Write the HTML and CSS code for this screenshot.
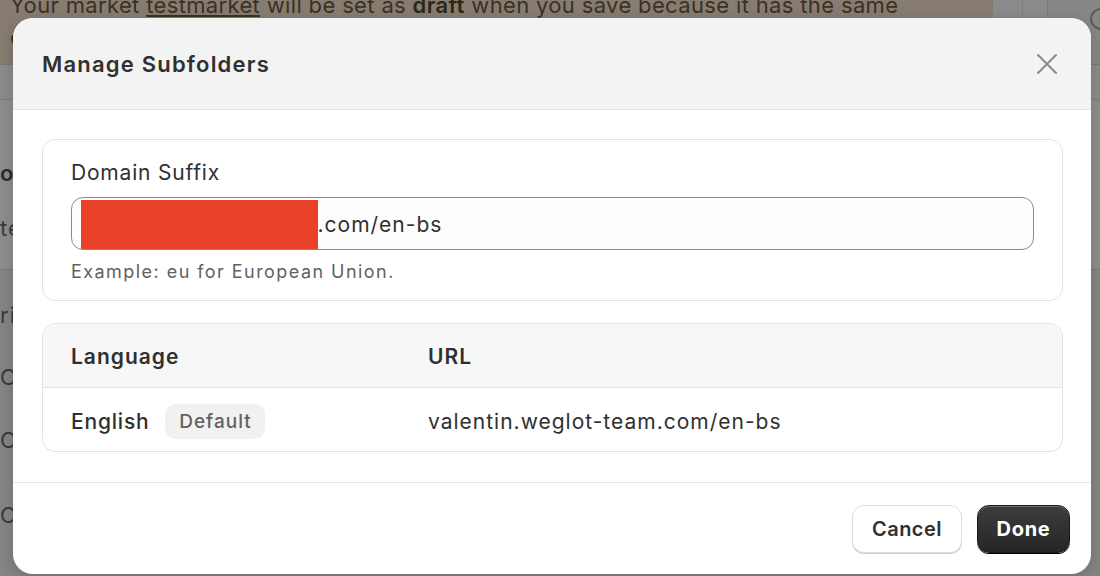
FILE: index.html
```html
<!DOCTYPE html>
<html lang="en">
<head>
<meta charset="utf-8">
<title>Manage Subfolders</title>
<link rel="stylesheet" href="styles.css">
</head>
<body>
<div class="page">
  <div class="top">
    <div class="banner">
      <p class="banner-text">Your market <span class="u">testmarket</span> will be set as <b>draft</b> when you save because it has the same</p>
      <p class="banner-text">conflicting domain settings as another market.</p>
    </div>
    <div class="side-col a"></div>
    <div class="side-col b"></div>
    <div class="side-col c">
      <span class="info">i</span>
    </div>
  </div>
  <div class="strip"></div>
  <div class="section first">
    <div class="frag bold">ok</div>
    <div class="frag">tes</div>
  </div>
  <div class="section second">
    <div class="frag f1">rit</div>
    <div class="frag f2">Cu</div>
    <div class="frag f3">Ca</div>
    <div class="frag f4">Or</div>
  </div>
</div>

<div class="modal" role="dialog" aria-label="Manage Subfolders">
  <div class="modal-header">
    <h2 class="modal-title">Manage Subfolders</h2>
    <button class="close" aria-label="Close">
      <svg width="20" height="20" viewBox="0 0 20 20"><path d="M1 1 L19 19 M19 1 L1 19" stroke="#8a8a8a" stroke-width="2" stroke-linecap="round" fill="none"/></svg>
    </button>
  </div>
  <div class="modal-body">
    <div class="card">
      <label class="field-label">Domain Suffix</label>
      <div class="input">
        <span class="redact"></span><span class="input-text">.com/en-bs</span>
      </div>
      <div class="help">Example: eu for European Union.</div>
    </div>
    <div class="card table">
      <div class="row head">
        <div class="col-lang">Language</div>
        <div class="col-url">URL</div>
      </div>
      <div class="row body-row">
        <div class="col-lang"><span class="lang">English</span><span class="badge">Default</span></div>
        <div class="col-url url">valentin.weglot-team.com/en-bs</div>
      </div>
    </div>
  </div>
  <div class="modal-footer">
    <button class="btn secondary">Cancel</button>
    <button class="btn primary">Done</button>
  </div>
</div>
</body>
</html>
```

FILE: styles.css
```css
* { box-sizing: border-box; }
html, body { margin: 0; padding: 0; }
body {
  width: 1100px;
  height: 576px;
  overflow: hidden;
  background: #858585;
  font-family: Inter, "Noto Sans", "Liberation Sans", sans-serif;
  position: relative;
}

/* dimmed page behind the modal */
.page { width: 1100px; height: 576px; }
.top { display: flex; height: 65px; border-bottom: 1px solid #7a7a7a; }
.banner {
  width: 993px;
  background: #877c72;
  padding: 0 0 0 10px;
  overflow: hidden;
}
.banner-text {
  margin: 0;
  font-size: 22px;
  line-height: 32px;
  letter-spacing: 0.35px;
  color: #3a3222;
  white-space: nowrap;
}
.banner-text:first-child { margin-top: -11px; }
.banner-text .u { text-decoration: underline; }
.banner-text b { font-weight: 600; color: #2e2717; }
.side-col { background: #8b8b8b; border-right: 1px solid #7d7d7d; }
.side-col.a { width: 30px; }
.side-col.b { width: 25px; }
.side-col.c { flex: 1; border-right: 0; background: #878787; position: relative; }
.info {
  position: absolute;
  left: 42px;
  top: 8px;
  width: 22px;
  height: 22px;
  border: 2px solid #5a5a5a;
  border-radius: 50%;
  font-size: 14px;
  line-height: 18px;
  font-weight: 700;
  color: #5a5a5a;
  text-align: center;
}
.strip { height: 35px; background: #8c8c8c; border-bottom: 1px solid #7c7c7c; }
.section { color: #3a3a3a; font-size: 22px; letter-spacing: 1px; }
.section.first {
  height: 170px;
  background: #8e8e8e;
  border-bottom: 1px solid #7c7c7c;
  padding-top: 60px;
  display: flex;
  flex-direction: column;
  gap: 29px;
}
.section.second {
  padding-top: 32px;
  display: flex;
  flex-direction: column;
}
.frag { line-height: 26px; }
.frag.f2 { margin-top: 36px; }
.frag.f3 { margin-top: 37px; }
.frag.f4 { margin-top: 49px; }
.frag.bold { font-weight: 600; color: #2a2a2a; }

/* modal */
.modal {
  position: absolute;
  left: 13px;
  top: 18px;
  width: 1078px;
  height: 556px;
  background: #ffffff;
  border-radius: 20px;
  overflow: hidden;
  box-shadow: 0 4px 16px rgba(0,0,0,0.18);
  display: flex;
  flex-direction: column;
}
.modal-header {
  height: 92px;
  flex: none;
  background: #f3f3f3;
  border-bottom: 1px solid #e3e3e3;
  display: flex;
  align-items: center;
  justify-content: space-between;
  padding: 0 34px 0 29px;
}
.modal-title {
  margin: 0;
  font-size: 22px;
  font-weight: 600;
  color: #303030;
  letter-spacing: 1.2px;
  padding-top: 1px;
}
.close {
  background: none;
  border: 0;
  padding: 0;
  width: 20px;
  height: 20px;
  display: flex;
  cursor: pointer;
}
.modal-body {
  padding: 29px 28px 30px 29px;
  display: flex;
  flex-direction: column;
  gap: 22px;
  border-bottom: 1px solid #e6e6e6;
}
.card {
  border: 1px solid #e3e3e3;
  border-radius: 13px;
  padding: 19px 29px 16px 28px;
  background: #fff;
}
.field-label {
  display: block;
  font-size: 21px;
  line-height: 27px;
  letter-spacing: 0.8px;
  color: #303030;
  margin-bottom: 11px;
}
.input {
  width: 963px;
  height: 53px;
  border: 1.5px solid #8a8a8a;
  border-radius: 12px;
  background: #fdfdfd;
  display: flex;
  align-items: stretch;
  padding: 1.5px 0 0 8.5px;
}
.redact {
  width: 237px;
  height: 49px;
  background: #e9412a;
}
.input-text {
  align-self: center;
  font-size: 21px;
  letter-spacing: 1px;
  color: #303030;
}
.help {
  margin-top: 10px;
  font-size: 18px;
  line-height: 24px;
  letter-spacing: 1.45px;
  color: #616161;
}

.card.table { padding: 0; overflow: hidden; }
.row {
  display: flex;
  align-items: center;
  height: 63px;
  padding-left: 28px;
  font-size: 21px;
  letter-spacing: 1px;
  color: #303030;
}
.row.head {
  height: 64px;
  background: #f7f7f7;
  border-bottom: 1px solid #e3e3e3;
  font-weight: 600;
  padding-top: 2px;
}
.row.body-row { padding-top: 3px; }
.col-lang { width: 357px; display: flex; align-items: center; gap: 16px; }
.lang { font-weight: 500; letter-spacing: 0.8px; }
.badge {
  display: inline-flex;
  align-items: center;
  justify-content: center;
  width: 100px;
  height: 35px;
  border-radius: 10px;
  background: #f1f1f1;
  color: #616161;
  font-size: 19px;
  font-weight: 500;
  letter-spacing: 1px;
}
.url { font-size: 21px; letter-spacing: 1px; }

.modal-footer {
  flex: 1;
  display: flex;
  justify-content: flex-end;
  align-items: center;
  gap: 15px;
  padding: 0 21px 0 0;
}
.btn {
  height: 48px;
  border-radius: 12px;
  font-family: Inter, "Noto Sans", "Liberation Sans", sans-serif;
  font-size: 20px;
  font-weight: 600;
  cursor: pointer;
}
.btn.secondary {
  width: 110px;
  background: #ffffff;
  color: #303030;
  border: 1px solid #dedede;
  box-shadow: 0 1px 0 #cfcfcf;
  letter-spacing: 0.5px;
}
.btn.primary {
  width: 93px;
  background: linear-gradient(#3d3d3d, #262626);
  color: #ffffff;
  border: 1px solid #1a1a1a;
  box-shadow: inset 0 1px 0 rgba(255,255,255,0.25), 0 1px 0 #000;
  font-weight: 700;
  letter-spacing: 0.7px;
}
```
